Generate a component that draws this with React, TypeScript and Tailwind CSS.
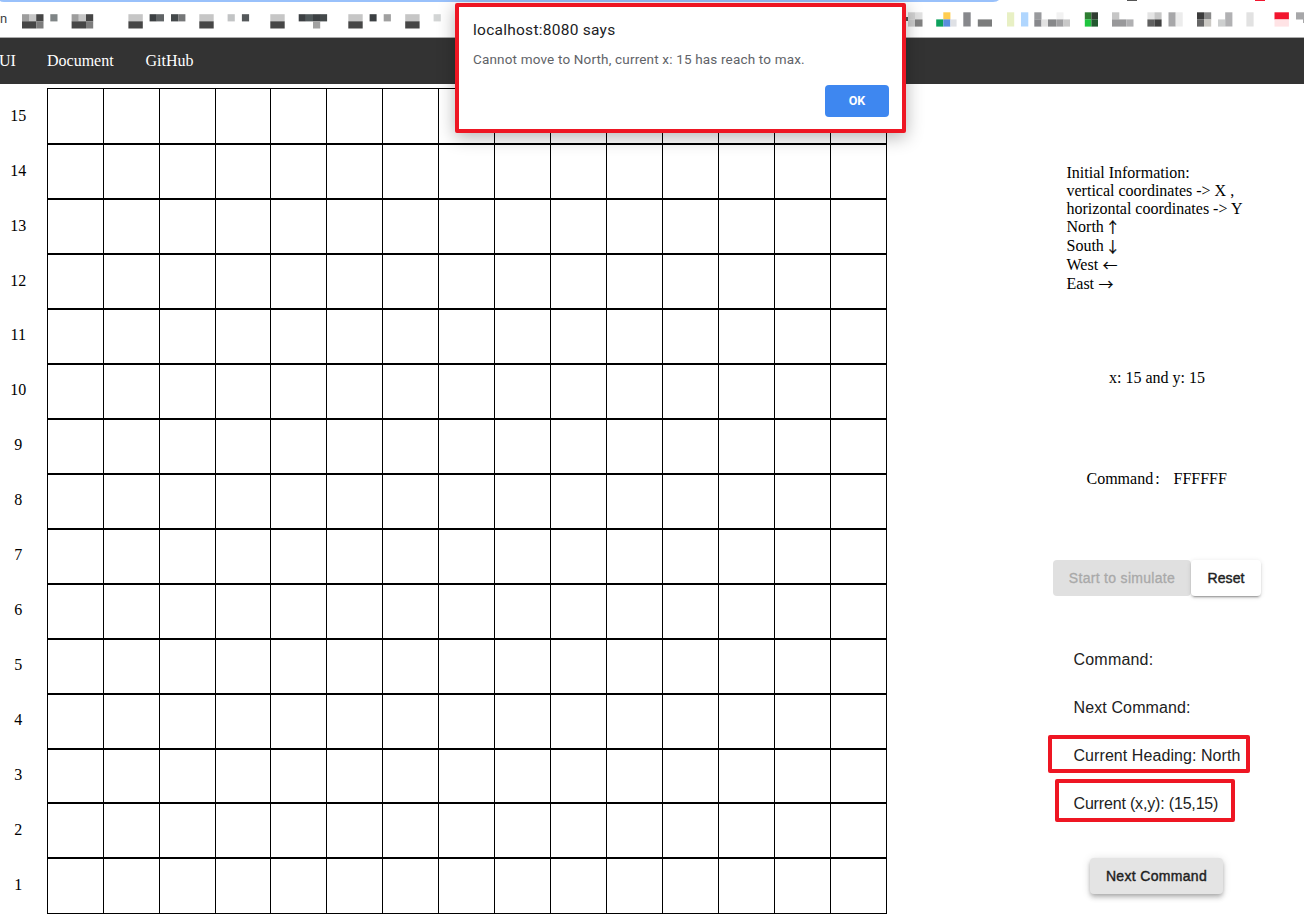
import React from "react";

type Block = [x: number, row: 0 | 1 | 2, width: number, fill: string];

// Bookmark strip blocks; row 2 spans both rows.
const leftBlocks: Block[] = [
  [22, 0, 7, "#9d9d9d"], [29, 0, 7.2, "#c6c6c6"], [36.2, 0, 7.3, "#464646"],
  [22, 1, 14.2, "#464646"], [36.2, 1, 7.3, "#7d7d7d"],
  [50.3, 0, 7.2, "#7f8586"],
  [71.6, 0, 7.2, "#9d9d9d"], [78.8, 0, 7.2, "#c6c6c6"], [86, 0, 7.2, "#464646"],
  [71.6, 1, 14.4, "#464646"], [86, 1, 7.2, "#7d7d7d"],
  [128.4, 0, 14.4, "#c6c6c6"], [128.4, 1, 14.4, "#464646"],
  [149.6, 0, 7.2, "#3c4043"], [156.8, 0, 7.2, "#606466"],
  [171, 0, 7.2, "#44494b"], [178.2, 0, 7.2, "#757778"],
  [199.3, 0, 14.4, "#c6c6c6"], [199.3, 1, 14.4, "#464646"],
  [227.6, 0, 7.2, "#c2c4c5"], [241.9, 0, 7.2, "#54585a"],
  [270.3, 0, 14.4, "#c6c6c6"], [270.3, 1, 14.4, "#464646"],
  [298.7, 0, 7.2, "#3c4043"], [305.9, 0, 7.2, "#50585a"], [313, 0, 7.2, "#3c4043"], [320, 0, 7.1, "#44494b"],
  [313, 1, 7.2, "#a2a2a2"],
  [348.3, 0, 14.4, "#c6c6c6"], [348.3, 1, 14.4, "#464646"],
  [369.6, 0, 7, "#3c4043"], [383.7, 0, 7.2, "#a0a0a0"],
  [405.2, 0, 14.4, "#c6c6c6"], [405.2, 1, 14.4, "#464646"],
  [433.6, 0, 7.2, "#d3d5d5"],
];

const rightBlocks: Block[] = [
  [908, 0, 7, "#d2d2d2"], [915, 0, 7.5, "#e2e2e2"], [908, 1, 7, "#cccccc"], [915, 1, 7.5, "#828282"],
  [936.2, 1, 7.1, "#0da15d"], [943.3, 0, 7.1, "#ffcd50"], [943.3, 1, 7.1, "#5a8dde"], [950.4, 1, 6.2, "#dfe1e5"],
  [963.3, 2, 7.4, "#87888c"], [977.8, 1, 14.2, "#7b7c7c"],
  [1007, 2, 7.2, "#e8f0c4"], [1021, 2, 7.3, "#b0d6fe"],
  [1034.3, 0, 7.2, "#999a9d"], [1034.3, 1, 7.2, "#87888c"], [1041.5, 1, 6.5, "#e2e2e2"],
  [1048, 1, 8.5, "#87888a"], [1056.5, 0, 7, "#f2f2f2"], [1056.5, 1, 7, "#a0a0a2"], [1063.5, 1, 6.5, "#c8c8c8"],
  [1084.8, 0, 6.6, "#2e7d32"], [1084.8, 1, 6.6, "#1fc53f"], [1091.4, 0, 6.6, "#303c32"], [1091.4, 1, 6.6, "#22592f"],
  [1112, 0, 7.3, "#c6c6c6"], [1112, 1, 14.3, "#98989a"], [1126.3, 1, 7.2, "#b0b0b2"],
  [1147.4, 0, 7, "#e4e4e4"], [1154.4, 0, 7.2, "#c6c6c6"], [1147.4, 1, 7, "#606060"], [1154.4, 1, 7.2, "#404040"],
  [1168.5, 2, 7.2, "#a7a7a9"], [1175.7, 2, 7, "#ececec"],
  [1197, 0, 7, "#3b3b3b"], [1204, 0, 7.2, "#888888"], [1197, 1, 7, "#666666"], [1204, 1, 7.2, "#cbc9c4"],
  [1218, 1, 7.2, "#cdcfcf"], [1225.2, 2, 7.2, "#b1b1b3"], [1246.4, 2, 7.2, "#e2e2e2"],
  [1274.5, 0, 14.4, "#f2152e"], [1274.5, 1, 14.4, "#ffe3e5"],
  [1296, 0, 8, "#a7a7a9"],
];

function Blocks({ items, top }: { items: Block[]; top: number }) {
  return (
    <>
      {items.map(([x, row, width, fill], i) => (
        <rect key={i} x={x} y={top + (row === 1 ? 7.1 : 0)} width={width} height={row === 2 ? 14.2 : 7.2} fill={fill} />
      ))}
    </>
  );
}

function BookmarkBar() {
  return (
    <div className="flex h-[38px] items-start border-b border-[#ababab] bg-white">
      <span className="w-0 shrink-0 whitespace-nowrap pt-[9px] font-['Roboto',sans-serif] text-[13px] leading-5 text-[#3c4043]">
        n
      </span>
      <svg className="h-[37px] w-[1304px] shrink-0" viewBox="0 0 1304 37" aria-hidden="true">
        <path d="M0 0H999Q997 2 993 2H4Q1 2 0 1Z" fill="#99c1fb" />
        <rect x="906" y="17" width="2" height="4" fill="#555555" />
        <rect x="1127" width="10" height="1" fill="#555555" />
        <rect x="1255" width="10" height="1" fill="#f2152e" />
        <rect x="1303" y="15" width="1" height="8" fill="#a7a7a9" />
        <Blocks items={leftBlocks} top={14.2} />
        <Blocks items={rightBlocks} top={12.3} />
      </svg>
    </div>
  );
}

const rows = Array.from({ length: 15 }, (_, i) => 15 - i);
const columns = Array.from({ length: 15 }, (_, i) => i + 1);

function rowHeight(row: number) {
  if (row === 15 || row === 1) return "h-[56px]";
  if (row === 3) return "h-[54px]";
  return "h-[55px]";
}

function labelPadding(row: number) {
  if (row === 15) return "pb-0";
  if (row >= 12 || row <= 3) return "pb-[2px]";
  return "pb-[4px]";
}

function Board() {
  return (
    <div className="flex w-[887px] shrink-0 flex-col pt-1">
      {rows.map((row) => (
        <div key={row} className={`flex shrink-0 ${rowHeight(row)}`}>
          <div className={`flex w-[47px] shrink-0 items-center pr-[10.5px] ${labelPadding(row)}`}>
            <span className="w-full text-center">{row}</span>
          </div>
          <div className="flex border-y border-r border-black">
            {columns.map((col) => (
              <div key={col} className={`border-l border-black ${col === 4 ? "w-[55px]" : "w-[56px]"}`} />
            ))}
          </div>
        </div>
      ))}
    </div>
  );
}

function Direction({ name, arrow, narrow = false }: { name: string; arrow: string; narrow?: boolean }) {
  return (
    <p className="flex h-[19px] items-start">
      <span>{name}</span>
      <span
        className={`font-['Noto_Sans_CJK_JP',sans-serif] text-[15px] leading-[17px] [-webkit-text-stroke:0.2px_#000] ${
          narrow ? "ml-[1.5px]" : "ml-[4.5px]"
        }`}
      >
        {arrow}
      </span>
    </p>
  );
}

function InfoPanel() {
  return (
    <aside className="flex flex-1 flex-col pl-[166px] pt-20">
      <div className="pl-[13.5px] leading-[18px]">
        <p>Initial Information:</p>
        <p>vertical coordinates -&gt; X ,</p>
        <p>horizontal coordinates -&gt; Y</p>
        <Direction name="North" arrow="↑" narrow />
        <Direction name="South" arrow="↓" narrow />
        <Direction name="West" arrow="←" />
        <Direction name="East" arrow="→" />
      </div>
      <p className="mt-[75px] pl-14 leading-[18px]">x: 15 and y: 15</p>
      <p className="mt-[83px] flex pl-[33.5px] leading-[18px]">
        <span className="w-[87px] [word-spacing:-2px]">Command :</span>
        <span>FFFFFF</span>
      </p>
      <div className="mt-[72px] flex font-['Liberation_Sans',sans-serif] text-sm leading-9">
        <button className="h-9 w-[138px] rounded bg-[#e0e0e0] tracking-[0.3px] text-[#a9a9a9] [-webkit-text-stroke:0.3px_#a9a9a9]">
          Start to simulate
        </button>
        <button className="h-9 w-[70px] rounded bg-white tracking-[0.1px] text-[#212121] shadow-[0_3px_1px_-2px_rgba(0,0,0,0.2),0_2px_2px_0_rgba(0,0,0,0.14),0_1px_5px_0_rgba(0,0,0,0.12)] [-webkit-text-stroke:0.4px_#212121]">
          Reset
        </button>
      </div>
      <div className="mt-10 pl-[20.5px] font-['Liberation_Sans',sans-serif] text-base leading-[48px] tracking-[0.07px] text-[#212121]">
        <p className="h-12 tracking-[0.2px]">Command:</p>
        <p className="h-12 tracking-[0.12px]">Next Command:</p>
        <p className="relative h-12">
          Current Heading: North
          <span className="absolute -left-[25.5px] top-[3px] h-[38px] w-[202px] rounded-[2px] border-4 border-[#ee1623]" />
        </p>
        <p className="relative h-12 tracking-[-0.17px]">
          Current (x,y): (15,15)
          <span className="absolute -left-[18.5px] top-[-1px] h-[43px] w-[180px] rounded-[2px] border-4 border-[#ee1623]" />
        </p>
      </div>
      <button className="ml-[37px] mt-[30px] h-9 w-[133px] rounded bg-[#e4e4e4] font-['Liberation_Sans',sans-serif] text-sm tracking-[0.32px] text-[#212121] shadow-[0_2px_4px_-1px_rgba(0,0,0,0.2),0_4px_5px_0_rgba(0,0,0,0.14),0_1px_10px_0_rgba(0,0,0,0.12)] [-webkit-text-stroke:0.4px_#212121]">
        Next Command
      </button>
    </aside>
  );
}

function AlertDialog() {
  return (
    <div
      role="alertdialog"
      className="absolute left-[455px] top-[3px] flex h-[130px] w-[451px] flex-col rounded-[2px] border-4 border-[#ee1623] bg-white px-[14px] pt-[13px] font-['Roboto',sans-serif] shadow-[0_4px_18px_rgba(0,0,0,0.3)]"
    >
      <h1 className="text-[15.5px] leading-5 tracking-[0.26px] text-[#202124]">localhost:8080 says</h1>
      <p className="mt-[9px] text-[13.5px] leading-5 tracking-[0.17px] text-[#5f6368]">
        Cannot move to North, current x: 15 has reach to max.
      </p>
      <button className="mr-[-1px] mt-4 h-8 w-16 self-end rounded bg-[#3e87f0] text-[12.5px] font-bold text-white">OK</button>
    </div>
  );
}

export default function App() {
  return (
    <div className="relative flex h-[918px] w-[1304px] flex-col overflow-hidden bg-white font-['Liberation_Serif',serif] text-base text-black">
      <BookmarkBar />
      <nav className="flex h-[46px] shrink-0 items-center bg-[#333333] text-white">
        <a className="-ml-[1px] w-12">UI</a>
        <a className="w-[98.5px]">Document</a>
        <a>GitHub</a>
      </nav>
      <main className="flex">
        <Board />
        <InfoPanel />
      </main>
      <AlertDialog />
    </div>
  );
}
